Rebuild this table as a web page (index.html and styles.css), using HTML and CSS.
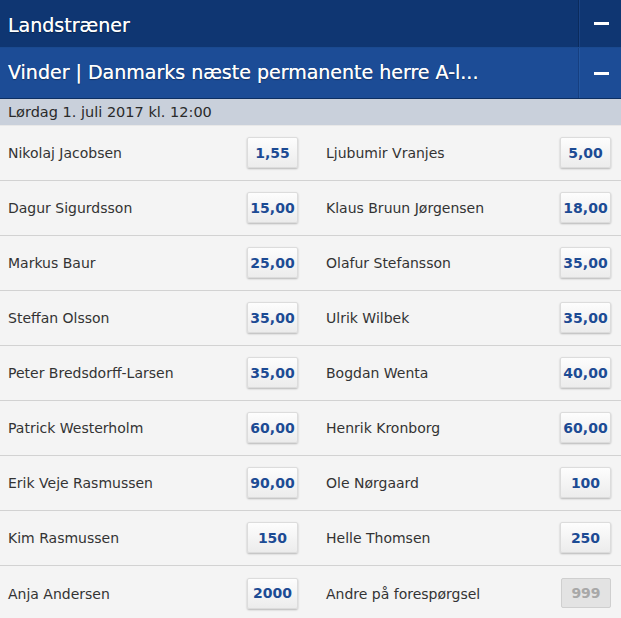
FILE: index.html
```html
<!DOCTYPE html>
<html>
<head>
<meta charset="utf-8">
<link rel="stylesheet" href="styles.css">
</head>
<body>
<div class="panel">
  <div class="head head-main">
    <div class="head-title">Landstræner</div>
    <div class="head-toggle"><span class="minus"></span></div>
  </div>
  <div class="head head-sub">
    <div class="head-title">Vinder | Danmarks næste permanente herre A-l...</div>
    <div class="head-toggle"><span class="minus"></span></div>
  </div>
  <div class="datebar">Lørdag 1. juli 2017 kl. 12:00</div>
  <div class="rows">
    <div class="row">
      <div class="cell left"><span class="name">Nikolaj Jacobsen</span><span class="odd">1,55</span></div>
      <div class="cell right"><span class="name">Ljubumir Vranjes</span><span class="odd">5,00</span></div>
    </div>
    <div class="row">
      <div class="cell left"><span class="name">Dagur Sigurdsson</span><span class="odd">15,00</span></div>
      <div class="cell right"><span class="name">Klaus Bruun Jørgensen</span><span class="odd">18,00</span></div>
    </div>
    <div class="row">
      <div class="cell left"><span class="name">Markus Baur</span><span class="odd">25,00</span></div>
      <div class="cell right"><span class="name">Olafur Stefansson</span><span class="odd">35,00</span></div>
    </div>
    <div class="row">
      <div class="cell left"><span class="name">Steffan Olsson</span><span class="odd">35,00</span></div>
      <div class="cell right"><span class="name">Ulrik Wilbek</span><span class="odd">35,00</span></div>
    </div>
    <div class="row">
      <div class="cell left"><span class="name">Peter Bredsdorff-Larsen</span><span class="odd">35,00</span></div>
      <div class="cell right"><span class="name">Bogdan Wenta</span><span class="odd">40,00</span></div>
    </div>
    <div class="row">
      <div class="cell left"><span class="name">Patrick Westerholm</span><span class="odd">60,00</span></div>
      <div class="cell right"><span class="name">Henrik Kronborg</span><span class="odd">60,00</span></div>
    </div>
    <div class="row">
      <div class="cell left"><span class="name">Erik Veje Rasmussen</span><span class="odd">90,00</span></div>
      <div class="cell right"><span class="name">Ole Nørgaard</span><span class="odd">100</span></div>
    </div>
    <div class="row">
      <div class="cell left"><span class="name">Kim Rasmussen</span><span class="odd">150</span></div>
      <div class="cell right"><span class="name">Helle Thomsen</span><span class="odd">250</span></div>
    </div>
    <div class="row last">
      <div class="cell left"><span class="name">Anja Andersen</span><span class="odd">2000</span></div>
      <div class="cell right"><span class="name">Andre på forespørgsel</span><span class="odd disabled">999</span></div>
    </div>
  </div>
</div>
</body>
</html>
```

FILE: styles.css
```css
* { box-sizing: border-box; }
html, body { margin: 0; padding: 0; background: #f4f4f4; }
body { font-family: "DejaVu Sans", Verdana, sans-serif; }

.panel { width: 621px; }

.head {
  display: flex;
  align-items: stretch;
  color: #fff;
}
.head-main {
  height: 48px;
  background: #0f3672;
  border-bottom: 1px solid #1a4a90;
}
.head-sub {
  height: 51px;
  background: #1c4c96;
  border-bottom: 1px solid #0d2f62;
}
.head-title {
  flex: 1;
  display: flex;
  align-items: center;
  padding-left: 8px;
  font-family: "DejaVu Sans", sans-serif;
  font-size: 19px;
  white-space: nowrap;
  overflow: hidden;
  text-shadow: 0 1px 1px rgba(0,0,0,0.35), 0 0 0.4px #fff;
}
.head-main .head-title { padding-top: 2px; }
.head-sub .head-title { padding-bottom: 2px; }
.head-toggle {
  width: 43px;
  display: flex;
  align-items: center;
  justify-content: center;
  border-left: 1px solid #0b2b5c;
  box-shadow: inset 1px 0 0 #1a4384;
}
.head-sub .head-toggle {
  border-left: 1px solid #163f80;
  box-shadow: inset 1px 0 0 #2356a0;
}
.minus {
  display: block;
  width: 15px;
  height: 3px;
  background: #fff;
  margin-left: 2px;
}

.datebar {
  height: 27px;
  background: #c9d0db;
  color: #2a2a2a;
  font-size: 14.5px;
  padding-left: 8px;
  display: flex;
  align-items: center;
  border-bottom: 1px solid #e8e8e8;
}

.row {
  display: grid;
  grid-template-columns: 318px 1fr;
  height: 55px;
  border-bottom: 1px solid #d2d2d2;
}
.row.last { border-bottom: none; }
.cell {
  display: flex;
  align-items: center;
  justify-content: space-between;
}
.cell.left { padding: 0 20px 0 8px; }
.cell.right { padding: 0 10px 0 8px; }

.name {
  font-size: 14px;
  color: #333;
}
.odd {
  width: 51px;
  height: 31px;
  display: flex;
  align-items: center;
  justify-content: center;
  font-size: 14px;
  font-weight: bold;
  color: #1c4b94;
  background: linear-gradient(#fdfdfd, #ececec);
  border: 1px solid #dcdcdc;
  border-radius: 2px;
  box-shadow: 0 1px 2px rgba(0,0,0,0.25);
  margin-top: -1px;
}
.odd.disabled {
  width: 50px;
  height: 30px;
  color: #a8a8a8;
  background: #e3e3e3;
  border: 1px solid #cfcfcf;
  box-shadow: none;
}
```
